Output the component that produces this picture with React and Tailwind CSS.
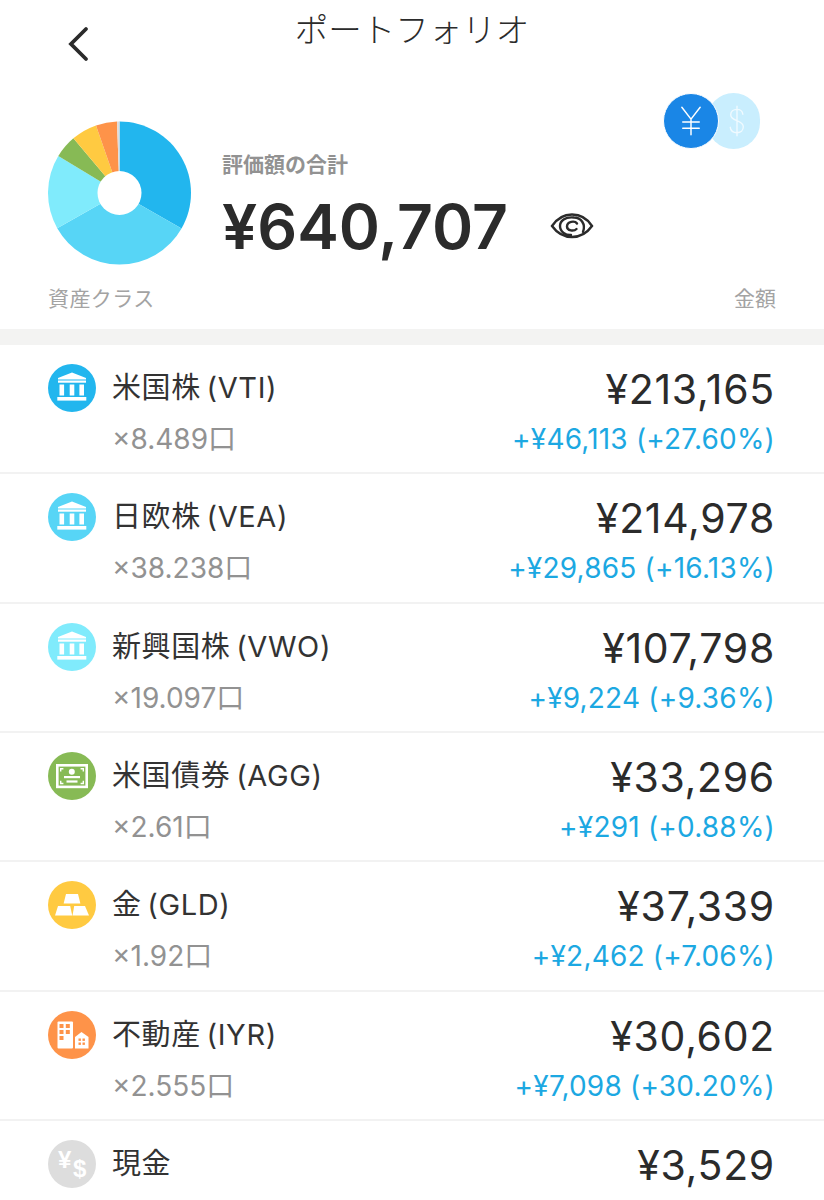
import React from "react";

const FONT = "font-['Inter','Noto_Sans_CJK_JP',sans-serif]";

const holdings = [
  { name: "米国株 (VTI)", units: "×8.489口", amount: "¥213,165", change: "+¥46,113 (+27.60%)", value: 213165, color: "#22b6ee", icon: "bank" },
  { name: "日欧株 (VEA)", units: "×38.238口", amount: "¥214,978", change: "+¥29,865 (+16.13%)", value: 214978, color: "#57d5f6", icon: "bank" },
  { name: "新興国株 (VWO)", units: "×19.097口", amount: "¥107,798", change: "+¥9,224 (+9.36%)", value: 107798, color: "#80ebfc", icon: "bank" },
  { name: "米国債券 (AGG)", units: "×2.61口", amount: "¥33,296", change: "+¥291 (+0.88%)", value: 33296, color: "#87ba55", icon: "bill" },
  { name: "金 (GLD)", units: "×1.92口", amount: "¥37,339", change: "+¥2,462 (+7.06%)", value: 37339, color: "#ffca41", icon: "gold" },
  { name: "不動産 (IYR)", units: "×2.555口", amount: "¥30,602", change: "+¥7,098 (+30.20%)", value: 30602, color: "#fe9349", icon: "estate" },
  { name: "現金", units: "", amount: "¥3,529", change: "", value: 3529, color: "#dddddd", icon: "cash" },
];

const BankIcon = () => (
  <svg viewBox="0 0 48 48" className="w-full h-full" fill="#fff">
    <path d="M24 8.5 L38 14 V15.5 H10 V14 Z" />
    <rect x="10" y="16.5" width="28" height="2.2" />
    <rect x="11.5" y="20.5" width="4.6" height="11" />
    <rect x="21.7" y="20.5" width="4.6" height="11" />
    <rect x="31.4" y="20.5" width="4.6" height="11" />
    <rect x="9.3" y="33" width="29" height="3.6" />
  </svg>
);

const BillIcon = () => (
  <svg viewBox="0 0 48 48" className="w-full h-full">
    <rect x="9.3" y="13.3" width="29.4" height="21.6" fill="none" stroke="#fff" strokeWidth="2.6" />
    <path d="M12 16h3.4v1.4h-2v2h-1.4zM36 16h-3.4v1.4h2v2h1.4zM12 32.2h3.4v-1.4h-2v-2h-1.4zM36 32.2h-3.4v-1.4h2v-2h1.4z" fill="#fff" />
    <circle cx="23.8" cy="19.8" r="3" fill="#fff" />
    <rect x="16" y="24" width="16" height="2.2" fill="#fff" />
    <rect x="18.5" y="28.4" width="11" height="2.2" fill="#fff" />
  </svg>
);

const GoldIcon = () => (
  <svg viewBox="0 0 48 48" className="w-full h-full" fill="#fff">
    <path d="M18 13h12l2.4 9.5H15.6z" />
    <path d="M10 25h12.2l2 9.5H7z" />
    <path d="M26.2 25H37l4 9.5H24.5z" />
  </svg>
);

const EstateIcon = () => (
  <svg viewBox="0 0 48 48" className="w-full h-full">
    <rect x="9.5" y="10.5" width="15.5" height="27" rx="1" fill="#fff" />
    <g fill="#fe9349">
      <rect x="11.5" y="13" width="4" height="4" />
      <rect x="17.8" y="13" width="4" height="4" />
      <rect x="11.5" y="19" width="4" height="4" />
      <rect x="17.8" y="19" width="4" height="4" />
      <rect x="11.5" y="25" width="4" height="4" />
    </g>
    <path d="M27 26 L33.5 21 L40.5 26 V37.5 H27 Z" fill="#fff" />
    <g fill="#fe9349">
      <rect x="30.5" y="27.5" width="2.4" height="2.4" />
      <rect x="34.5" y="27.5" width="2.4" height="2.4" />
      <rect x="30.5" y="31.5" width="2.4" height="2.4" />
      <rect x="34.5" y="31.5" width="2.4" height="2.4" />
    </g>
  </svg>
);

const CashIcon = () => (
  <div className="relative w-full h-full text-white font-bold font-['Liberation_Sans',sans-serif]">
    <span className="absolute left-[10px] top-[8px] text-[24px] leading-none">¥</span>
    <span className="absolute left-[25px] top-[17px] text-[24px] leading-none">$</span>
  </div>
);

const icons = { bank: BankIcon, bill: BillIcon, gold: GoldIcon, estate: EstateIcon, cash: CashIcon };

// builds one donut wedge, angles in radians clockwise from 12 o'clock
const wedge = (cx, cy, r, start, end) => {
  const x1 = cx + r * Math.sin(start);
  const y1 = cy - r * Math.cos(start);
  const x2 = cx + r * Math.sin(end);
  const y2 = cy - r * Math.cos(end);
  const large = end - start > Math.PI ? 1 : 0;
  return `M${cx} ${cy}L${x1} ${y1}A${r} ${r} 0 ${large} 1 ${x2} ${y2}Z`;
};

const Pie = () => {
  const total = holdings.reduce((sum, h) => sum + h.value, 0);
  let angle = 0;
  return (
    <svg viewBox="0 0 144 144" className="w-[144px] h-[144px] shrink-0">
      {holdings.map((h) => {
        const start = angle;
        angle += (h.value / total) * Math.PI * 2;
        return <path key={h.name} d={wedge(71.5, 72, 71.5, start, angle)} fill={h.color} />;
      })}
      <circle cx="71.5" cy="72" r="22" fill="#fff" />
    </svg>
  );
};

const EyeIcon = () => (
  <svg viewBox="0 0 44 32" className="w-[44px] h-[32px]" fill="none" stroke="#2b2b2b" strokeWidth="2.4" strokeLinecap="round">
    <path d="M2 16 C8 7 15 4.5 22 4.5 C30 4.5 37 8 42 16 C37 23 30 27 22 27 C14 27 7 23 2 16 Z" />
    <path d="M33 22 C36 14 31 7.5 24 7.5 C15 6.5 10 11 10 16 C10 22 16 25.5 21 25" />
    <path d="M27 13.5 C25 10.5 17 11 17 16.5 C17 21 24 21.5 26.5 19" />
  </svg>
);

const CurrencyToggle = () => (
  <div className="flex">
    <div className="z-10 w-[56px] h-[56px] rounded-full bg-[#1a86e6] border-[1.5px] border-white flex items-center justify-center">
      <svg viewBox="0 0 24 32" className="w-[22px] h-[32px]" fill="none" stroke="#fff" strokeWidth="1.6" strokeLinecap="round">
        <path d="M2 1 L12 14 L22 1 M12 14 V31 M3 17 H21 M3 24 H21" />
      </svg>
    </div>
    <div className="-ml-[12px] w-[53px] h-[56px] rounded-full bg-[#c9eefe] flex items-center justify-center pl-[6px]">
      <svg viewBox="0 0 20 36" className="w-[18px] h-[36px]" fill="none" stroke="#f0faff" strokeWidth="1.5" strokeLinecap="round">
        <path d="M16.5 10.5 C16 6.5 13 5 10 5 C6 5 3 7.5 3 11 C3 19 17 16 17 24.5 C17 28.5 14 31 10 31 C6 31 3 29 2.5 25 M10 1.5 V34.5" />
      </svg>
    </div>
  </div>
);

const HoldingRow = ({ item }) => {
  const Icon = icons[item.icon];
  return (
    <div className="h-[129.33px] border-b-2 border-[#f2f2f2] pl-[48px] pr-[49px] pt-[19px] flex items-start">
      <div className="w-[48px] h-[48px] rounded-full shrink-0 overflow-hidden" style={{ backgroundColor: item.color }}>
        <Icon />
      </div>
      <div className="ml-[16px] mt-[3px]">
        <div className="text-[29px] leading-[42px] tracking-[0.6px] [word-spacing:-3px] text-[#333] whitespace-nowrap">{item.name}</div>
        <div className="text-[28px] leading-[40px] mt-[10px] text-[#929292] whitespace-nowrap">{item.units}</div>
      </div>
      <div className="ml-auto mt-[2px] text-right whitespace-nowrap">
        <div className="text-[41px] leading-[46px] tracking-[0.7px] text-[#2b2b2b]">{item.amount}</div>
        <div className="text-[28px] leading-[40px] mt-[7px] tracking-[0.2px] text-[#1ca8e2]">{item.change}</div>
      </div>
    </div>
  );
};

const App = () => {
  return (
    <div className={`${FONT} w-[824px] h-[1200px] overflow-hidden bg-white`}>
      <div className="h-0 overflow-visible">
        <div className="text-center text-[33.5px] font-light leading-[40px] pt-[10px] text-[#2b2b2b]">ポートフォリオ</div>
      </div>
      <section className="h-[329px] pl-[48px] pr-[48px] flex justify-between">
        <div className="flex flex-col">
          <div className="pt-[26px] pl-[18px] h-[93px]">
            <svg viewBox="0 0 24 36" className="w-[24px] h-[36px]" fill="none" stroke="#2b2b2b" strokeWidth="3.8" strokeLinecap="round">
              <path d="M20 3 L5 18 L20 33" />
            </svg>
          </div>
          <div className="flex">
            <div className="mt-[28px]"><Pie /></div>
            <div className="ml-[30px] mt-[56px]">
              <div className="text-[21px] leading-[32px] font-bold text-[#929292]">評価額の合計</div>
              <div className="flex items-center mt-[7px]">
                <div className="text-[62.5px] leading-[76px] font-semibold text-[#2b2b2b]">¥640,707</div>
                <div className="ml-[42px]"><EyeIcon /></div>
              </div>
            </div>
          </div>
          <div className="mt-auto mb-[15px] text-[21px] leading-[30px] tracking-[0.4px] text-[#a3a3a3]">資産クラス</div>
        </div>
        <div className="flex flex-col items-end">
          <div className="mt-[93px] mr-[16px]"><CurrencyToggle /></div>
          <div className="mt-auto mb-[15px] text-[21px] leading-[30px] text-[#a3a3a3]">金額</div>
        </div>
      </section>
      <div className="h-[16px] bg-[#f3f3f2]"></div>
      {holdings.map((h) => <HoldingRow key={h.name} item={h} />)}
    </div>
  );
};

export default App;
